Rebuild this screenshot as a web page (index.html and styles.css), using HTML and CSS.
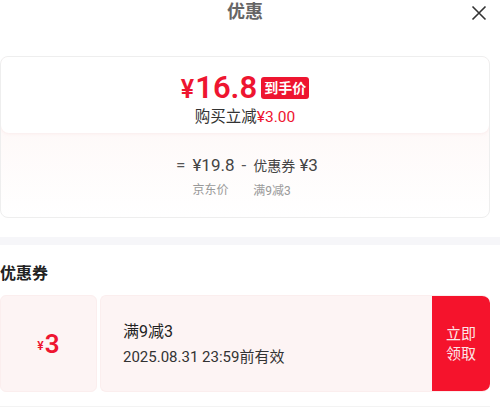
FILE: index.html
```html
<!DOCTYPE html>
<html lang="zh-CN">
<head>
  <meta charset="UTF-8">
  <title>优惠</title>
  <link rel="stylesheet" href="styles.css">
</head>
<body>
<div class="sheet">
  <div class="header">
    <h1>优惠</h1>
    <span class="close">
      <svg width="16" height="16" viewBox="0 0 16 16"><path d="M1.5 1.5 L14.5 14.5 M14.5 1.5 L1.5 14.5" stroke="#333" stroke-width="1.6" fill="none"/></svg>
    </span>
  </div>

  <div class="card">
    <div class="card-top">
      <div class="price-row">
        <span class="price"><span class="yen">¥</span>16.8</span>
        <span class="badge">到手价</span>
      </div>
      <div class="save">购买立减<span class="red">¥3.00</span></div>
    </div>
    <div class="card-bottom">
      <div class="formula">
        <span class="op">=</span>
        <div class="term">
          <div class="amount">¥19.8</div>
          <div class="label">京东价</div>
        </div>
        <span class="op minus">-</span>
        <div class="term">
          <div class="amount"><span class="small">优惠券</span> ¥3</div>
          <div class="label">满9减3</div>
        </div>
      </div>
    </div>
  </div>

  <div class="band"></div>

  <h2>优惠券</h2>

  <div class="coupon">
    <div class="stub"><span class="yen">¥</span>3</div>
    <div class="body">
      <div class="info">
        <div class="rule">满9减3</div>
        <div class="expire">2025.08.31 23:59前有效</div>
      </div>
      <div class="take">立即<br>领取</div>
    </div>
  </div>

  <div class="line"></div>
</div>
</body>
</html>
```

FILE: styles.css
```css
body {
  margin: 0;
  background: #fff;
  font-family: Roboto, "Noto Sans CJK SC", sans-serif;
  color: #222;
}

.sheet {
  padding: 0 10px 0 0;
}

.header {
  position: relative;
  height: 24px;
  text-align: center;
}

.header h1 {
  margin: 0;
  font-size: 18px;
  line-height: 24px;
  font-weight: bold;
  color: #666;
}

.close {
  position: absolute;
  right: 3px;
  top: 5px;
  width: 16px;
  height: 16px;
}

.card {
  margin-top: 32px;
  border: 1px solid #eee;
  border-radius: 8px;
  background: linear-gradient(#fdf4f3, #fff);
  overflow: hidden;
}

.card-top {
  background: #fff;
  padding: 12px 0 6px;
  border-radius: 0 0 8px 8px;
  box-shadow: 0 1px 3px rgba(240, 200, 200, 0.25);
  text-align: center;
}

.price-row {
  display: flex;
  justify-content: center;
  align-items: center;
  gap: 4px;
  height: 36px;
}

.price {
  color: #ee1530;
  font-size: 31px;
  font-weight: 600;
}

.price .yen {
  font-size: 25px;
  margin-right: 1px;
}

.badge {
  background: #ee1530;
  color: #fff;
  font-size: 14px;
  font-weight: bold;
  line-height: 22px;
  padding: 0 3px;
  border-radius: 3px;
  margin-top: 1px;
}

.save {
  font-size: 15.5px;
  line-height: 20px;
  color: #333;
  margin-top: 2px;
}

.red {
  color: #ee1530;
}

.card-bottom {
  height: 84px;
  padding-top: 23px;
  box-sizing: border-box;
}

.formula {
  display: flex;
  justify-content: center;
  align-items: flex-start;
  gap: 7px;
  margin-left: 4px;
}

.op {
  font-size: 17px;
  line-height: 18px;
  color: #555;
}

.amount {
  font-size: 17px;
  line-height: 18px;
  color: #444;
}

.amount .small {
  font-size: 14px;
}

.label {
  margin-top: 9px;
  font-size: 12px;
  line-height: 14px;
  color: #999;
}

.band {
  margin: 19px -10px 0 0;
  height: 8px;
  background: #f6f6f9;
}

h2 {
  margin: 18px 0 0;
  font-size: 16px;
  line-height: 22px;
  font-weight: bold;
  color: #222;
}

.coupon {
  display: flex;
  gap: 3px;
  height: 97px;
  margin-top: 10px;
}

.stub {
  width: 97px;
  background: #fdf4f4;
  border: 1px solid #fbeeee;
  border-radius: 6px;
  box-sizing: border-box;
  display: flex;
  align-items: center;
  justify-content: center;
  color: #ee1530;
  font-size: 26px;
  font-weight: 600;
}

.stub .yen {
  font-size: 12px;
  margin-top: 4px;
  margin-right: 1px;
}

.body {
  flex: 1;
  display: flex;
  background: #fdf4f4;
  border: 1px solid #fbeeee;
  border-right: none;
  border-radius: 6px 8px 8px 6px;
  overflow: hidden;
}

.info {
  flex: 1;
  padding: 25px 0 0 22px;
}

.rule {
  font-size: 16px;
  line-height: 22px;
  color: #222;
}

.expire {
  margin-top: 4px;
  font-size: 15px;
  line-height: 20px;
  color: #333;
}

.take {
  width: 58px;
  background: #f5132c;
  color: #fce6e8;
  font-size: 15px;
  line-height: 20px;
  display: flex;
  align-items: center;
  justify-content: center;
  text-align: center;
}

.line {
  margin-top: 14px;
  height: 1px;
  background: #f3f3f3;
}
```
